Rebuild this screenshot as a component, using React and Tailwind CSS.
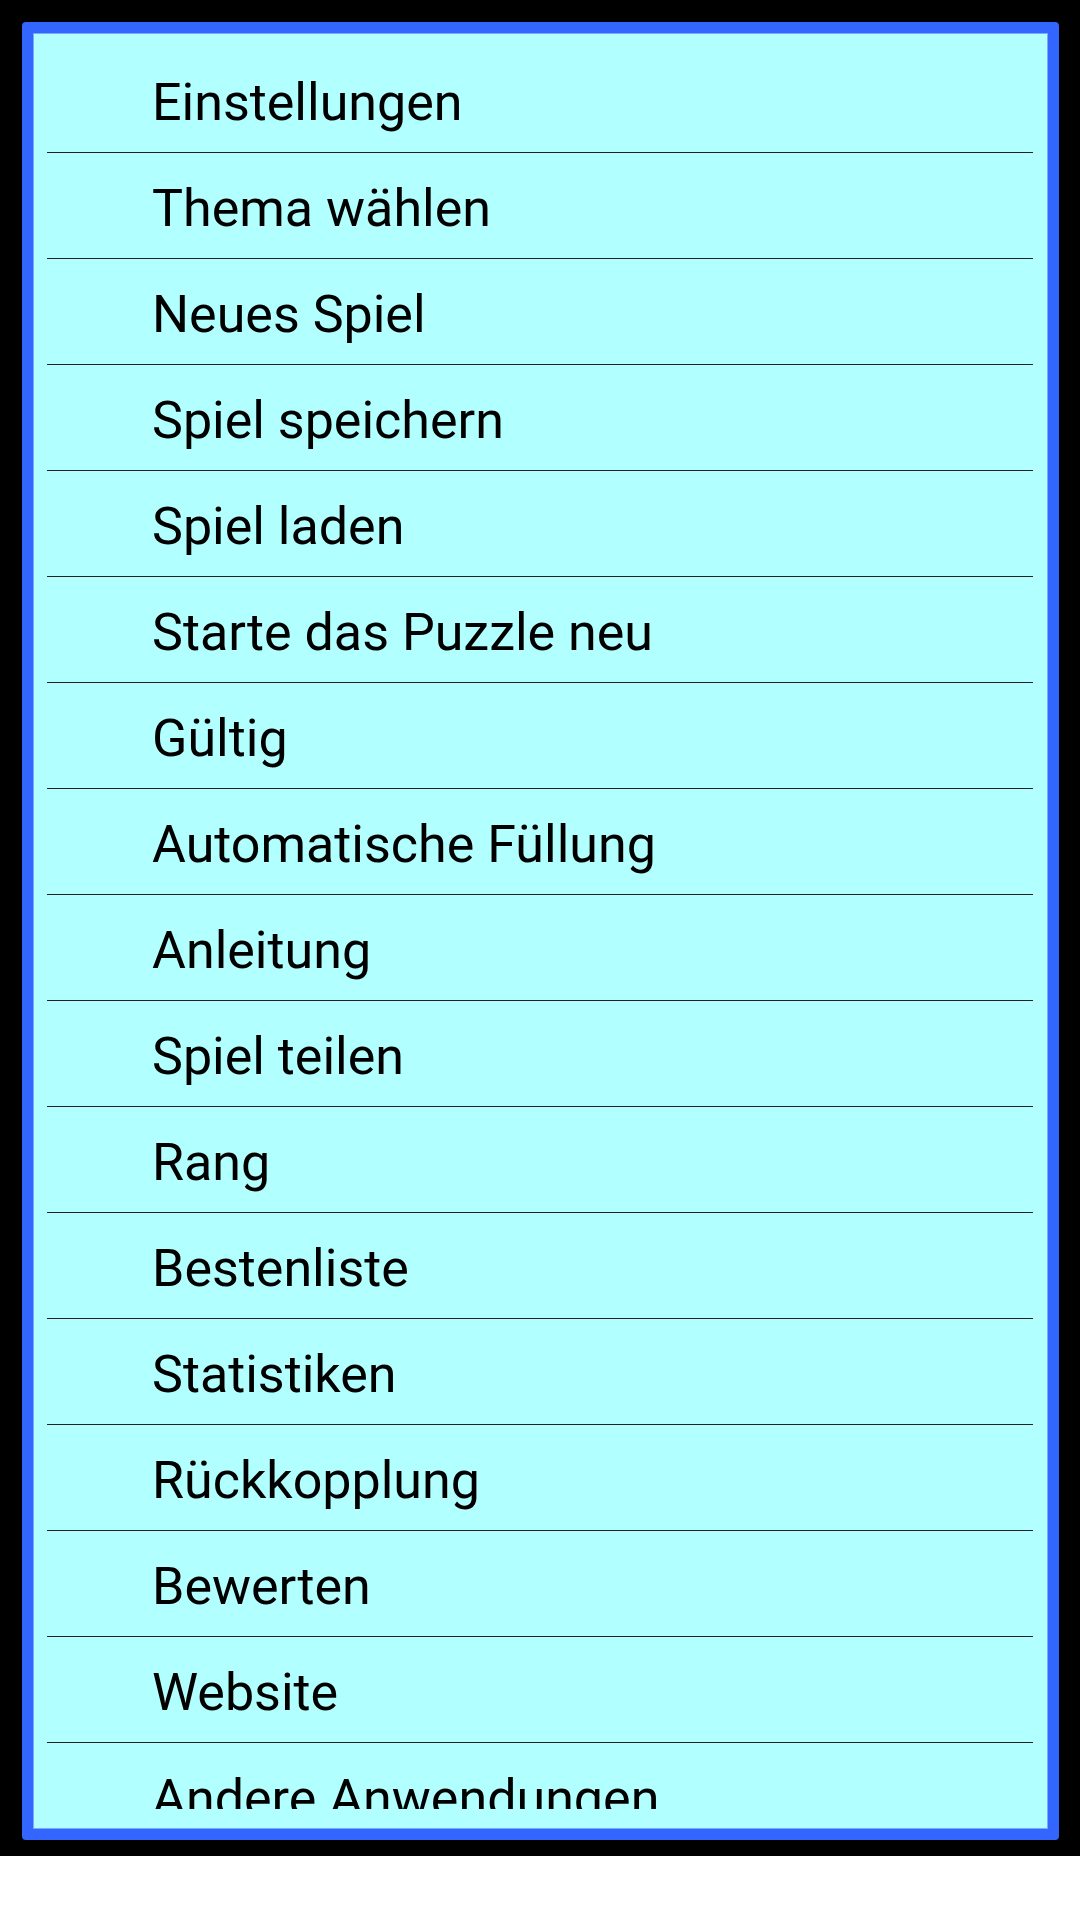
const items = [
  'Einstellungen',
  'Thema wählen',
  'Neues Spiel',
  'Spiel speichern',
  'Spiel laden',
  'Starte das Puzzle neu',
  'Gültig',
  'Automatische Füllung',
  'Anleitung',
  'Spiel teilen',
  'Rang',
  'Bestenliste',
  'Statistiken',
  'Rückkopplung',
  'Bewerten',
  'Website',
  'Andere Anwendungen',
]

export default function App() {
  return (
    <div className="w-[1080px] h-[1920px] bg-white" style={{ fontFamily: 'Roboto, "Noto Sans", sans-serif' }}>
      <div className="h-[1856px] bg-black pt-[22px] pl-[22px]">
        <div className="w-[1037px] h-[1818px] rounded-[4px] border-[11px] border-[#3366ff]">
          <div className="h-full border border-[#77aaff] bg-[#b2ffff] pt-[13px] pl-[13px] pr-[14px]">
            <div className="h-[1762px] overflow-hidden">
              {items.map((label, i) => (
                <div
                  key={label}
                  className={`h-[106px] pl-[105px] pt-[17px] text-[52px] leading-normal text-black ${i < items.length - 1 ? 'border-b border-[#222]' : ''}`}
                >
                  {label}
                </div>
              ))}
            </div>
          </div>
        </div>
      </div>
    </div>
  )
}
